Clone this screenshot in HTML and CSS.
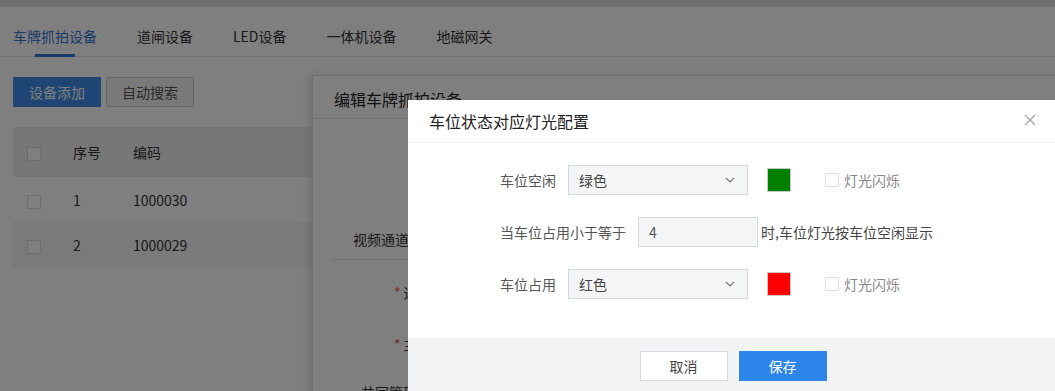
FILE: index.html
```html
<!DOCTYPE html>
<html lang="zh-CN">

<head>
    <meta charset="UTF-8">
    <title>设备管理</title>
    <link rel="stylesheet" href="styles.css">
</head>

<body>
<div class="topbar"></div>

<div class="tabs">
    <a href="#" class="tab active">车牌抓拍设备</a>
    <a href="#" class="tab">道闸设备</a>
    <a href="#" class="tab">LED设备</a>
    <a href="#" class="tab">一体机设备</a>
    <a href="#" class="tab">地磁网关</a>
</div>

<div class="content">
    <div class="toolbar">
        <button class="btn btn-primary">设备添加</button>
        <button class="btn btn-plain">自动搜索</button>
    </div>

    <table class="grid">
        <thead>
            <tr>
                <th class="col-check"><span class="check"></span></th>
                <th class="col-no">序号</th>
                <th>编码</th>
            </tr>
        </thead>
        <tbody>
            <tr>
                <td class="col-check"><span class="check"></span></td>
                <td class="col-no">1</td>
                <td>1000030</td>
            </tr>
            <tr class="hover">
                <td class="col-check"><span class="check"></span></td>
                <td class="col-no">2</td>
                <td>1000029</td>
            </tr>
        </tbody>
    </table>
</div>

<!-- drawer: 编辑车牌抓拍设备 -->
<div class="drawer">
    <div class="drawer-head">编辑车牌抓拍设备</div>
    <div class="drawer-body">
        <div class="section-title">视频通道</div>
        <div class="field"><span class="req">*</span>通道名称</div>
        <div class="field"><span class="req">*</span>主码流</div>
        <div class="field plain">共同管理</div>
    </div>
</div>

<div class="mask"></div>

<div class="dialog">
    <div class="dialog-head">
        <span class="dialog-title">车位状态对应灯光配置</span>
        <span class="dialog-close">
            <svg width="12" height="12" viewBox="0 0 12 12"><path d="M1 1L11 11M11 1L1 11" stroke="#a0a0a0" stroke-width="1.2" fill="none"/></svg>
        </span>
    </div>

    <div class="dialog-body">
        <div class="form-row">
            <label class="form-label">车位空闲</label>
            <div class="select">
                <span>绿色</span>
                <svg width="10" height="6" viewBox="0 0 10 6"><path d="M1 1L5 5L9 1" stroke="#777" stroke-width="1.2" fill="none"/></svg>
            </div>
            <span class="swatch green"></span>
            <span class="check"></span>
            <span class="check-text">灯光闪烁</span>
        </div>

        <div class="form-row">
            <label class="form-label">当车位占用小于等于</label>
            <div class="input">4</div>
            <span class="suffix">时,车位灯光按车位空闲显示</span>
        </div>

        <div class="form-row">
            <label class="form-label">车位占用</label>
            <div class="select">
                <span>红色</span>
                <svg width="10" height="6" viewBox="0 0 10 6"><path d="M1 1L5 5L9 1" stroke="#777" stroke-width="1.2" fill="none"/></svg>
            </div>
            <span class="swatch red"></span>
            <span class="check"></span>
            <span class="check-text">灯光闪烁</span>
        </div>
    </div>

    <div class="dialog-foot">
        <button class="btn btn-cancel">取消</button>
        <button class="btn btn-save">保存</button>
    </div>
</div>
</body>
</html>
```

FILE: styles.css
```css
body {
    margin: 0;
    padding: 0;
    height: 391px;
    overflow: hidden;
    background-color: white;
    font-family: "Noto Sans CJK SC", "Noto Sans", sans-serif;
    font-size: 14px;
    color: #333;
}

.topbar {
    height: 7px;
    background-color: #dcdcdc;
}

.tabs {
    display: flex;
    height: 49px;
    padding-left: 13px;
    border-bottom: 1px solid #e2e2e2;
}

.tab {
    position: relative;
    margin-right: 40px;
    line-height: 58px;
    height: 49px;
    color: #333;
    text-decoration: none;
}

.tab.active {
    color: #2f74d0;
}

.tab.active::after {
    content: "";
    position: absolute;
    left: 50%;
    bottom: -1px;
    width: 40px;
    margin-left: -20px;
    height: 3px;
    background-color: #2f74d0;
}

.content {
    padding: 20px 13px 0;
}

.toolbar {
    display: flex;
    gap: 5px;
}

.btn {
    width: 88px;
    height: 30px;
    padding: 0;
    font-family: inherit;
    font-size: 14px;
    border: 1px solid transparent;
    cursor: pointer;
}

.btn-primary {
    background-color: #3c8ae6;
    color: white;
}

.btn-plain {
    background-color: #f2f2f2;
    border-color: #cfcfcf;
    color: #555;
}

.grid {
    margin-top: 20px;
    width: 300px;
    border-collapse: collapse;
}

.grid th,
.grid td {
    padding: 0;
    line-height: 20px;
}

.grid th {
    height: 50px;
    background-color: #efefef;
    font-weight: normal;
    text-align: left;
}

.grid td {
    height: 45px;
}

.grid tr.hover td {
    background-color: #f5f5f5;
}

.grid .col-check {
    width: 60px;
    padding-left: 14px;
    box-sizing: border-box;
}

.grid .col-no {
    width: 60px;
}

.check {
    display: inline-block;
    width: 12px;
    height: 12px;
    border: 1px solid #dadada;
    background-color: white;
    vertical-align: middle;
}

.drawer {
    position: absolute;
    left: 312px;
    top: 75px;
    width: 760px;
    height: 330px;
    background-color: white;
    border: 1px solid #e0e0e0;
    box-shadow: -3px 0 8px rgba(0, 0, 0, 0.12);
}

.drawer-head {
    height: 42px;
    line-height: 46px;
    padding-left: 21px;
    font-size: 16px;
    color: #222;
    border-bottom: 1px solid #e4e4e4;
}

.drawer-body {
    padding: 0 0 0 20px;
}

.section-title {
    margin-top: 110px;
    padding: 0 0 10px 20px;
    border-bottom: 1px solid #dedede;
    color: #333;
}

.field {
    padding-left: 61px;
    margin-top: 22px;
    height: 30px;
    color: #333;
}

.field.plain {
    padding-left: 28px;
    margin-top: 18px;
}

.req {
    margin-right: 3px;
    color: #d9534f;
}

.mask {
    position: fixed;
    left: 0;
    top: 0;
    right: 0;
    bottom: 0;
    background-color: rgba(0, 0, 0, 0.5);
}

.dialog {
    position: absolute;
    left: 408px;
    top: 100px;
    width: 650px;
    background-color: white;
}

.dialog-head {
    height: 42px;
    display: flex;
    align-items: center;
    justify-content: space-between;
    padding: 0 22px 0 21px;
    border-bottom: 1px solid #ececec;
}

.dialog-title {
    font-size: 16px;
    color: #222;
}

.dialog-close {
    display: flex;
    margin-top: -2px;
}

.dialog-body {
    height: 173px;
    padding: 22px 0 0 92px;
}

.form-row {
    display: flex;
    align-items: center;
    height: 30px;
    margin-bottom: 22px;
}

.form-label {
    margin-right: 12px;
    color: #555;
}

.select {
    box-sizing: border-box;
    width: 180px;
    height: 30px;
    display: flex;
    align-items: center;
    justify-content: space-between;
    padding: 0 12px 0 10px;
    background-color: #f4f5f7;
    border: 1px solid #d7dbe1;
    color: #444;
}

.swatch {
    width: 22px;
    height: 22px;
    margin-left: 19px;
    border: 1px solid #c9c9c9;
}

.swatch.green {
    background-color: #008000;
}

.swatch.red {
    background-color: #ff0000;
}

.form-row .check {
    margin-left: 34px;
    border-color: #e0e0e0;
}

.check-text {
    margin-left: 5px;
    color: #888;
}

.input {
    box-sizing: border-box;
    width: 120px;
    height: 30px;
    line-height: 28px;
    padding-left: 10px;
    background-color: #f3f5f7;
    border: 1px solid #d7dbe1;
    color: #555;
}

.suffix {
    margin-left: 3px;
    color: #444;
}

.dialog-foot {
    display: flex;
    justify-content: center;
    gap: 11px;
    padding: 13px 0;
    background-color: #f3f4f6;
}

.btn-cancel {
    background-color: white;
    border-color: #d5d8dd;
    color: #444;
}

.btn-save {
    background-color: #2e86eb;
    color: white;
}
```
